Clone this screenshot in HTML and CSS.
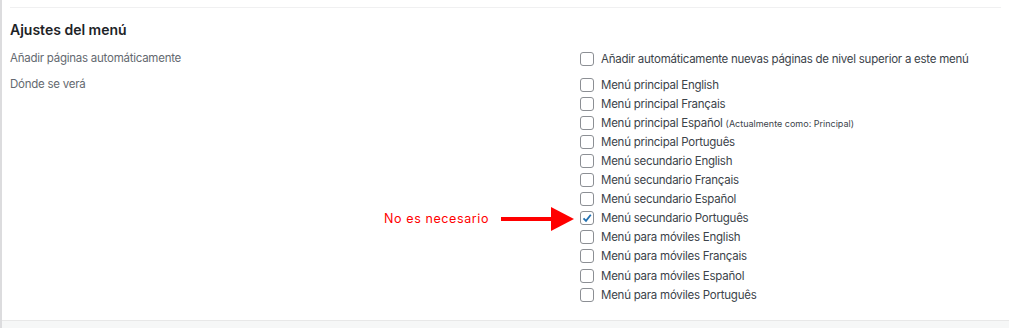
FILE: index.html
```html
<!DOCTYPE html>
<html lang="es">
<head>
    <meta charset="UTF-8">
    <meta name="viewport" content="width=device-width, initial-scale=1.0">
    <title>Ajustes del menú</title>
    <link rel="stylesheet" href="styles.css">
</head>
<body>
    <div class="menu-panel">
        <div class="top-rule"></div>

        <div class="menu-settings">
            <h3>Ajustes del menú</h3>

            <div class="setting-row">
                <div class="setting-label">Añadir páginas automáticamente</div>
                <div class="setting-field">
                    <label class="check"><span class="box"></span><span>Añadir automáticamente nuevas páginas de nivel superior a este menú</span></label>
                </div>
            </div>

            <div class="setting-row">
                <div class="setting-label">Dónde se verá</div>
                <div class="setting-field locations">
                    <label class="check"><span class="box"></span><span>Menú principal English</span></label>
                    <label class="check"><span class="box"></span><span>Menú principal Français</span></label>
                    <label class="check"><span class="box"></span><span>Menú principal Español <span class="note">(Actualmente como: Principal)</span></span></label>
                    <label class="check"><span class="box"></span><span>Menú principal Português</span></label>
                    <label class="check"><span class="box"></span><span>Menú secundario English</span></label>
                    <label class="check"><span class="box"></span><span>Menú secundario Français</span></label>
                    <label class="check"><span class="box"></span><span>Menú secundario Español</span></label>
                    <label class="check">
                        <span class="annotation">
                            <span>No es necesario</span>
                            <svg width="74" height="26" viewBox="0 0 74 26">
                                <rect x="0" y="11" width="54" height="4" fill="#f00"/>
                                <polygon points="50,1 73,13 50,25" fill="#f00"/>
                            </svg>
                        </span>
                        <span class="box">
                            <svg width="12" height="12" viewBox="0 0 12 12"><path d="M2.5 6.3 L5 8.8 L9.8 2.8" fill="none" stroke="#2271b1" stroke-width="1.8"/></svg>
                        </span><span>Menú secundario Português</span></label>
                    <label class="check"><span class="box"></span><span>Menú para móviles English</span></label>
                    <label class="check"><span class="box"></span><span>Menú para móviles Français</span></label>
                    <label class="check"><span class="box"></span><span>Menú para móviles Español</span></label>
                    <label class="check"><span class="box"></span><span>Menú para móviles Português</span></label>
                </div>
            </div>
        </div>

        <div class="panel-footer"></div>
    </div>
</body>
</html>
```

FILE: styles.css
```css
body {
    margin: 0;
    font-family: 'Inter', 'Liberation Sans', sans-serif;
    background: white;
    color: #3c434a;
}

.menu-panel {
    height: 328px;
    border-left: 2px solid #dcdcde;
    display: flex;
    flex-direction: column;
}

.top-rule {
    margin: 7px 8px 0 8px;
    border-top: 1px solid #f0f0f1;
}

.menu-settings {
    flex: 1;
    padding: 0 8px;
}

h3 {
    margin: 13px 0 10px 0;
    font-size: 14px;
    font-weight: 600;
    color: #1d2327;
    line-height: 18px;
}

.setting-row {
    display: grid;
    grid-template-columns: 570px 1fr;
    margin-bottom: 7px;
}

.setting-label {
    font-size: 11.5px;
    letter-spacing: -0.25px;
    color: #646970;
    line-height: 19px;
}

.check {
    position: relative;
    display: flex;
    align-items: center;
    gap: 7px;
    height: 19.1px;
    font-size: 11.5px;
    letter-spacing: -0.25px;
    color: #3c434a;
    white-space: nowrap;
}

.box {
    width: 12px;
    height: 12px;
    border: 1px solid #8c8f94;
    border-radius: 3px;
    display: flex;
    align-items: center;
    justify-content: center;
    flex-shrink: 0;
}

.note {
    font-size: 9px;
    letter-spacing: 0;
}

.annotation {
    position: absolute;
    right: 100%;
    top: -3px;
    margin-right: 5px;
    display: flex;
    align-items: center;
    gap: 12px;
    color: #f00;
    font-size: 12.5px;
    letter-spacing: 0.6px;
    white-space: nowrap;
}

.annotation svg {
    display: block;
}

.panel-footer {
    height: 7px;
    border-top: 1px solid #e8e8e8;
    background: #f6f7f7;
}
```
